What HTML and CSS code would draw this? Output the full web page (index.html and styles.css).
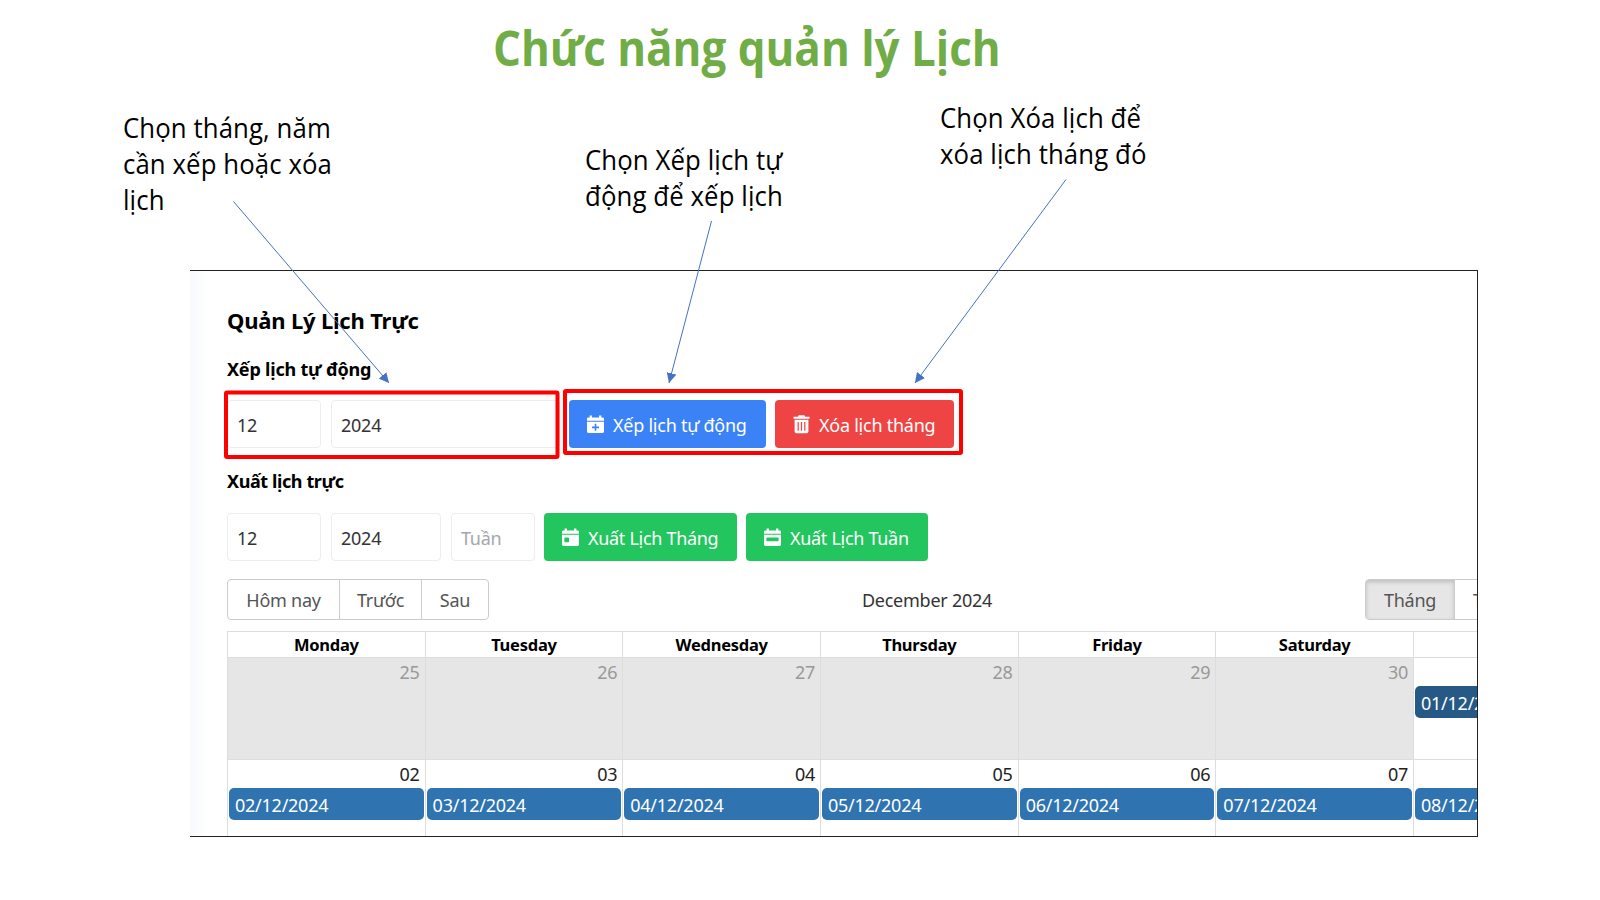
FILE: index.html
```html
<!DOCTYPE html>
<html lang="vi">
<head>
<meta charset="utf-8">
<title>Chức năng quản lý Lịch</title>
<link rel="stylesheet" href="styles.css">
</head>
<body>
<main class="slide">
  <h1 class="title">Chức năng quản lý Lịch</h1>

  <section class="panel">
    <h2 class="heading">Quản Lý Lịch Trực</h2>
    <h3 class="sub">Xếp lịch tự động</h3>
    <div class="row">
      <div class="input month">12</div>
      <div class="input year-wide">2024</div>
      <div class="btn blue auto">
        <svg class="icon" viewBox="0 0 18 20"><path fill="#fff" d="M2.800 .5h2.400v2h7.600v-2h2.400v2H16.500a1.500 1.500 0 0 1 1.500 1.500v2H0V4a1.500 1.500 0 0 1 1.500-1.500h1.300zM0 7h18v10.500a1.500 1.500 0 0 1-1.500 1.500h-15A1.500 1.500 0 0 1 0 17.500z"/><path stroke="#3b82f6" stroke-width="1.700" d="M9 9.300v7.400M5.300 13h7.400"/></svg>
        <span>Xếp lịch tự động</span>
      </div>
      <div class="btn red remove">
        <svg class="icon" viewBox="0 0 18 20"><path fill="#fff" d="M6 .3h6l1 1.500h4.500v2.200H.5V1.800H5zM1.700 5h14.600v12.500a1.800 1.800 0 0 1-1.800 1.800h-11a1.800 1.800 0 0 1-1.800-1.800z"/><path stroke="#ef4444" stroke-width="1.300" d="M5.500 7.300v9.400M9 7.300v9.400M12.500 7.300v9.400"/></svg>
        <span>Xóa lịch tháng</span>
      </div>
    </div>
    <h3 class="sub second">Xuất lịch trực</h3>
    <div class="row">
      <div class="input month">12</div>
      <div class="input year">2024</div>
      <div class="input week">Tuần</div>
      <div class="btn green by-month">
        <svg class="icon" viewBox="0 0 18 20"><path fill="#fff" d="M2.800 .5h2.400v2h7.600v-2h2.400v2H16.500a1.500 1.500 0 0 1 1.500 1.500v2H0V4a1.500 1.500 0 0 1 1.500-1.500h1.300zM0 7h18v10.500a1.500 1.500 0 0 1-1.500 1.500h-15A1.500 1.500 0 0 1 0 17.500z"/><rect x="2.500" y="10" width="5" height="5" rx="1" fill="#22c55e"/></svg>
        <span>Xuất Lịch Tháng</span>
      </div>
      <div class="btn green by-week">
        <svg class="icon" viewBox="0 0 18 20"><path fill="#fff" d="M2.800 .5h2.400v2h7.600v-2h2.400v2H16.500a1.500 1.500 0 0 1 1.500 1.500v2H0V4a1.500 1.500 0 0 1 1.500-1.500h1.300zM0 7h18v10.500a1.500 1.500 0 0 1-1.500 1.500h-15A1.500 1.500 0 0 1 0 17.500z"/><rect x="2.500" y="10" width="13" height="4" rx="1" fill="#22c55e"/></svg>
        <span>Xuất Lịch Tuần</span>
      </div>
    </div>

    <div class="toolbar">
      <div class="group"><span class="today">Hôm nay</span><span class="prev">Trước</span><span class="next">Sau</span></div>
      <div class="label">December 2024</div>
      <div class="group views"><span class="active">Tháng</span><span class="week-view">Tuần</span></div>
    </div>

    <div class="calendar">
      <div class="days head">
        <div>Monday</div><div>Tuesday</div><div>Wednesday</div><div>Thursday</div><div>Friday</div><div>Saturday</div><div></div>
      </div>
      <div class="days first">
        <div class="off">25</div><div class="off">26</div><div class="off">27</div><div class="off">28</div><div class="off">29</div><div class="off">30</div>
        <div>&nbsp;<p class="event selected">01/12/2024</p></div>
      </div>
      <div class="days">
        <div>02<p class="event">02/12/2024</p></div>
        <div>03<p class="event">03/12/2024</p></div>
        <div>04<p class="event">04/12/2024</p></div>
        <div>05<p class="event">05/12/2024</p></div>
        <div>06<p class="event">06/12/2024</p></div>
        <div>07<p class="event">07/12/2024</p></div>
        <div>&nbsp;<p class="event">08/12/2024</p></div>
      </div>
    </div>
  </section>

  <p class="note note-pick">Chọn tháng, năm<br>cần xếp hoặc xóa<br>lịch</p>
  <p class="note note-auto">Chọn Xếp lịch tự<br>động để xếp lịch</p>
  <p class="note note-remove">Chọn Xóa lịch để<br>xóa lịch tháng đó</p>

  <svg class="marks" viewBox="0 0 1600 900">
    <defs>
      <marker id="tip" viewBox="0 0 10 10" refX="10" refY="5" markerWidth="10" markerHeight="10" markerUnits="userSpaceOnUse" orient="auto"><path d="M0 0L10 5L0 10z" fill="#4472c4"/></marker>
    </defs>
    <g fill="none" stroke="#ff0000" stroke-width="4">
      <rect x="226" y="392.500" width="331.500" height="64.500" rx="1"/>
      <rect x="565" y="391" width="396" height="62" rx="1"/>
    </g>
    <g stroke="#4472c4" stroke-width="1">
      <path d="M233.500 201.500L389 383" marker-end="url(#tip)"/>
      <path d="M711.500 221L669 383" marker-end="url(#tip)"/>
      <path d="M1066 179.500L915 383" marker-end="url(#tip)"/>
    </g>
  </svg>
</main>
</body>
</html>
```
FILE: styles.css
```css
* { box-sizing: border-box; }
body { margin: 0; background: #fff; }
h1, h2, h3, p { margin: 0; }

.slide {
  position: relative;
  width: 1600px;
  height: 900px;
  overflow: hidden;
  font-family: "Noto Sans", sans-serif;
  font-size: 18px;
  letter-spacing: -.25px;
}
.title {
  height: 252px;
  padding: 18px 0 0 493px;
  font: 700 48px/60px "Open Sans", sans-serif;
  letter-spacing: 0;
  color: #70ad47;
  white-space: nowrap;
  transform: scaleX(.915);
  transform-origin: 493px 0;
}

.note {
  position: absolute;
  font: 27.5px/36px "Open Sans", sans-serif;
  letter-spacing: .1px;
  color: #000;
  white-space: nowrap;
  transform: scaleX(.937);
  transform-origin: 0 0;
}
.note-pick { left: 122.5px; top: 110px; }
.note-auto { left: 584.5px; top: 142px; }
.note-remove { left: 939.5px; top: 100px; }
.marks { position: absolute; inset: 0; width: 1600px; height: 900px; }

.panel {
  width: 1288px;
  height: 567px;
  margin: 18px 0 0 190px;
  padding: 31px 0 0 37px;
  border: solid #222;
  border-width: 1px 1px 1px 0;
  overflow: hidden;
  background: linear-gradient(90deg, #f8f9fd 0, #fff 18px);
}
.heading { font-size: 22px; line-height: 36px; letter-spacing: -.2px; white-space: nowrap; }
.sub { margin: 14px 0; font-size: 18px; line-height: 34px; letter-spacing: -.2px; white-space: nowrap; }
.sub.second { margin: 16px 0 15px; letter-spacing: -.4px; }

.row { display: flex; gap: 10px; height: 48px; }
.input {
  border: 1px solid #ededf0;
  border-radius: 4px;
  padding: 0 9px;
  background: #fff;
  color: #333;
  line-height: 48px;
}
.month { width: 94px; }
.year { width: 110px; }
.year-wide { width: 229px; }
.week { width: 84px; color: #a5a7ae; }
.btn {
  display: flex;
  align-items: center;
  gap: 9px;
  margin-left: -1px;
  padding-left: 18px;
  border-radius: 4px;
  color: #fff;
  white-space: nowrap;
}
.btn span { padding-top: 1px; }
.icon { width: 17px; height: 19px; flex: none; }
.blue { background: #3b82f6; }
.red { background: #ef4444; }
.green { background: #22c55e; letter-spacing: -.3px; }
.auto { width: 197px; }
.remove { width: 179px; }
.by-month { width: 193px; }
.by-week { width: 182px; }

.toolbar {
  display: flex;
  justify-content: space-between;
  width: 1400px;
  height: 41px;
  margin: 18px 0 11px;
  color: #333;
}
.group { display: flex; border: 1px solid #ccc; border-radius: 4px; overflow: hidden; color: #555; line-height: 40px; text-align: center; }
.group span + span { border-left: 1px solid #ccc; }
.today { width: 111px; }
.prev { width: 82px; }
.next { width: 67px; }
.label { line-height: 42px; }
.views { width: 262px; }
.active { width: 88px; background: #e6e6e6; box-shadow: inset 0 2px 4px rgba(0, 0, 0, .18); }
.week-view { padding-left: 18px; }

.calendar { width: 1386px; border: 1px solid #ddd; }
.days { display: grid; grid-template-columns: 196.6px repeat(6, 197.7px); height: 102px; line-height: 28px; color: #222; text-align: right; }
.days > div { padding-right: 5px; }
.days > div + div { border-left: 1px solid #ddd; }
.days + .days { border-top: 1px solid #ddd; }
.days.head { height: 25px; font-size: 16.5px; font-weight: 700; line-height: 26px; color: #000; text-align: center; }
.days.head > div { padding: 0; }
.days .off { background: #e6e6e6; color: #999; }
.event {
  height: 32px;
  margin: 0 -4px 0 1px;
  padding-left: 6px;
  border-radius: 5px;
  background: #2f74b0;
  color: #fff;
  line-height: 34px;
  text-align: left;
}
.event.selected { background: #265985; }
```
